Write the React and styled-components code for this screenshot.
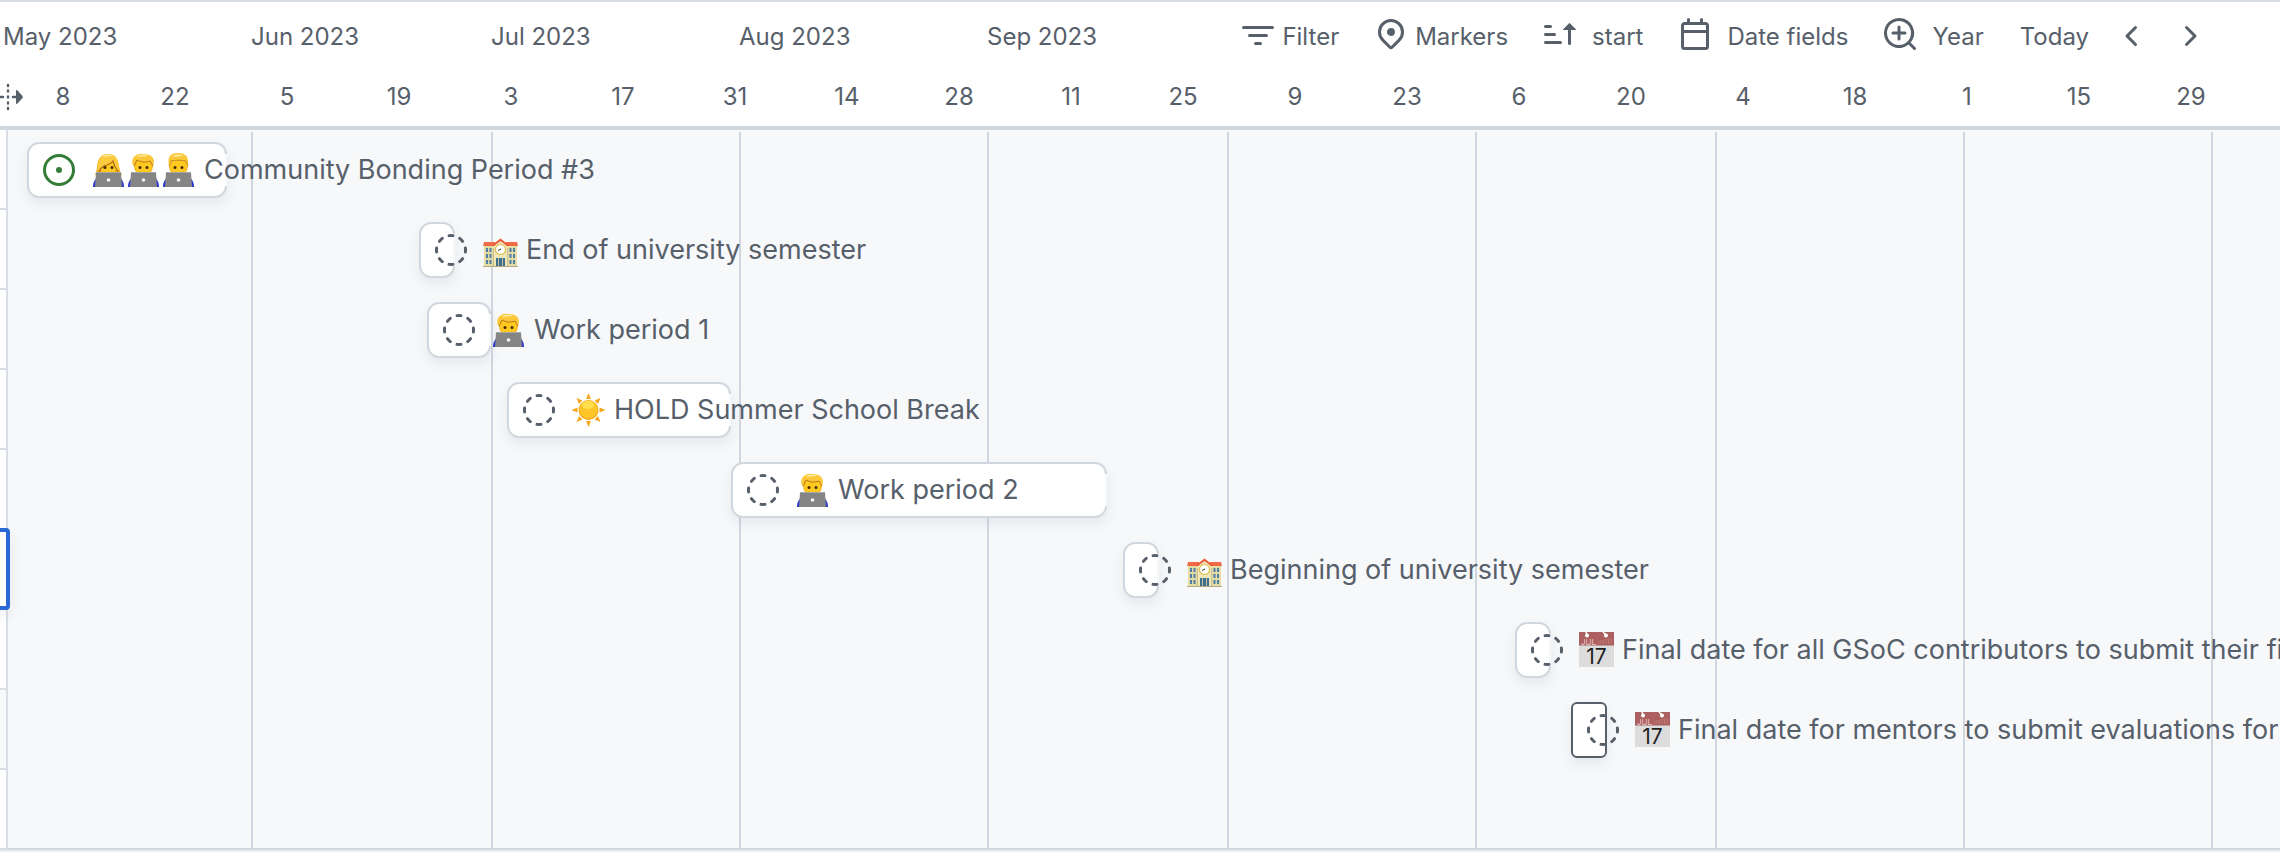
import React from "react";
import styled, { createGlobalStyle } from "styled-components";

const DAY = 8;
const SCROLL = 5;

const GlobalStyle = createGlobalStyle`
  *, *::before, *::after { box-sizing: border-box; }
  body {
    margin: 0;
    min-height: 100vh;
    background: #eaeef2;
    color: #57606a;
    font-family: Inter, "Liberation Sans", sans-serif;
  }
  ul, ol { margin: 0; padding: 0; list-style: none; }
`;

const Page = styled.div`
  overflow: hidden;
`;

const Header = styled.header`
  position: relative;
  background: #fff;
  border-top: 2px solid #d8dee4;
  border-bottom: 4px solid #d0d7de;
  font-size: 24px;
  line-height: 32px;
`;

const HeaderTop = styled.div`
  display: flex;
  align-items: center;
  height: 70px;
`;

const Months = styled.ol`
  display: flex;
  flex: 1;
  min-width: 0;
  overflow: hidden;
  padding-left: 3px;
`;

const Month = styled.li`
  flex: none;
  width: ${(p) => p.$days * DAY}px;
`;

const Toolbar = styled.div`
  display: flex;
  align-items: center;
  flex: none;
  gap: 36px;
  padding-right: 75px;
`;

const ToolButton = styled.button`
  display: flex;
  align-items: center;
  gap: ${(p) => p.$gap || 0}px;
  padding: 0;
  border: 0;
  background: none;
  color: inherit;
  font: inherit;
  cursor: pointer;
`;

const Pager = styled.div`
  display: flex;
  gap: 24px;
  margin-left: -8px;
`;

const Days = styled.ol`
  display: flex;
  height: 54px;
  padding: 9px 0 0 7px;
`;

const DayLabel = styled.li`
  flex: none;
  width: ${14 * DAY}px;
  text-align: center;
`;

const ResizeMark = styled.svg`
  position: absolute;
  left: 0;
  bottom: 14px;
  width: 24px;
  height: 30px;
`;

const Body = styled.main`
  display: flex;
`;

const TableEdge = styled.div`
  position: relative;
  z-index: 1;
  flex: none;
  width: 8px;
  background: #fff;
  border-right: 2px solid #d8dee4;
`;

const EdgeCell = styled.div`
  height: 80px;
  border-bottom: 2px solid #d8dee4;
  background: ${(p) => (p.$muted ? "#f6f8fa" : "#fff")};
`;

const SelectedCell = styled.div`
  position: absolute;
  top: 398px;
  right: -4px;
  width: 40px;
  height: 82px;
  border: 4px solid #2b6ad6;
  border-radius: 4px;
  background: #fff;
  box-shadow: 0 6px 12px rgba(140, 149, 159, 0.15);
`;

const Timeline = styled.section`
  display: grid;
  flex: 1;
  min-width: 0;
  overflow: hidden;
  background: #f6f8fa;
  border-bottom: 2px solid #d0d7de;
`;

const GridLines = styled.div`
  grid-area: 1 / 1;
  display: flex;
  min-width: 0;
  padding-top: 2px;
  overflow: hidden;
`;

const GridMonth = styled.div`
  flex: none;
  width: ${(p) => p.$days * DAY - (p.$first ? SCROLL : 0)}px;
  border-left: ${(p) => (p.$first ? 0 : 2)}px solid #d0d7de;
`;

const Items = styled.ul`
  grid-area: 1 / 1;
  min-width: 0;
`;

const Item = styled.li`
  display: flex;
  align-items: center;
  height: 80px;
  padding-left: ${(p) => p.$start * DAY - SCROLL}px;
`;

const Bar = styled.div`
  position: relative;
  display: flex;
  align-items: center;
  flex: none;
  gap: 16px;
  width: ${(p) => Math.max(36, p.$days * DAY)}px;
  height: 56px;
  padding-left: 14px;
  border: 2px solid ${(p) => (p.$focused ? "#57606a" : "#d0d7de")};
  border-radius: ${(p) => (p.$focused ? 6 : 12)}px;
  background: #fff;
  box-shadow: 0 6px 12px rgba(140, 149, 159, 0.15);
  white-space: nowrap;

  &::after {
    content: "";
    position: absolute;
    top: 10px;
    right: -2px;
    width: 2px;
    height: 32px;
    background: ${(p) => (p.$focused ? "transparent" : "#f6f8fa")};
  }
`;

const Title = styled.a`
  position: relative;
  z-index: 1;
  display: flex;
  align-items: center;
  gap: 8px;
  color: #57606a;
  font-size: 27px;
  line-height: 40px;
  text-decoration: none;
`;

const EmojiRun = styled.span`
  display: flex;
`;

const Glyph = styled.svg`
  display: block;
  flex: none;
  width: 32px;
  height: 32px;
  fill: currentColor;
`;

const ToolGlyph = styled(Glyph)`
  margin-bottom: ${(p) => (p.$raised ? 6 : 2)}px;
`;

const StatusGlyph = styled(Glyph)`
  position: relative;
  z-index: 1;
  color: ${(p) => (p.$open ? "#347d39" : "#57606a")};
`;

const EmojiGlyph = styled.svg`
  display: block;
  flex: none;
  width: 35px;
  height: 36px;
`;

const PATHS = {
  filter:
    "M.75 3h14.5a.75.75 0 0 1 0 1.5H.75a.75.75 0 0 1 0-1.5ZM3 7.75A.75.75 0 0 1 3.75 7h8.5a.75.75 0 0 1 0 1.5h-8.5A.75.75 0 0 1 3 7.75Zm3 4a.75.75 0 0 1 .75-.75h2.5a.75.75 0 0 1 0 1.5h-2.5a.75.75 0 0 1-.75-.75Z",
  location:
    "m12.596 11.596-3.535 3.536a1.5 1.5 0 0 1-2.122 0l-3.535-3.536a6.5 6.5 0 1 1 9.192-9.193 6.5 6.5 0 0 1 0 9.193Zm-1.06-8.132v-.001a5 5 0 1 0-7.072 7.072L8 14.07l3.536-3.534a5 5 0 0 0 0-7.072ZM8 9a2 2 0 1 1-.001-3.999A2 2 0 0 1 8 9Z",
  sort:
    "m12.927 2.573 3 3A.25.25 0 0 1 15.75 6H13.5v6.75a.75.75 0 0 1-1.5 0V6H9.75a.25.25 0 0 1-.177-.427l3-3a.25.25 0 0 1 .354 0ZM0 12.25a.75.75 0 0 1 .75-.75h7.5a.75.75 0 0 1 0 1.5H.75a.75.75 0 0 1-.75-.75Zm0-4a.75.75 0 0 1 .75-.75h4.5a.75.75 0 0 1 0 1.5H.75A.75.75 0 0 1 0 8.25Zm0-4a.75.75 0 0 1 .75-.75h2.5a.75.75 0 0 1 0 1.5H.75A.75.75 0 0 1 0 4.25Z",
  calendar:
    "M4.75 0a.75.75 0 0 1 .75.75V2h5V.75a.75.75 0 0 1 1.5 0V2h1.25c.966 0 1.75.784 1.75 1.75v10.5A1.75 1.75 0 0 1 13.25 16H2.75A1.75 1.75 0 0 1 1 14.25V3.75C1 2.784 1.784 2 2.75 2H4V.75A.75.75 0 0 1 4.75 0ZM2.5 7.5v6.75c0 .138.112.25.25.25h10.5a.25.25 0 0 0 .25-.25V7.5Zm10.75-4H2.75a.25.25 0 0 0-.25.25V6h11V3.75a.25.25 0 0 0-.25-.25Z",
  zoom:
    "M3.75 7.5a.75.75 0 0 1 .75-.75h2.25V4.5a.75.75 0 0 1 1.5 0v2.25h2.25a.75.75 0 0 1 0 1.5H8.25v2.25a.75.75 0 0 1-1.5 0V8.25H4.5a.75.75 0 0 1-.75-.75ZM7.5 0a7.5 7.5 0 0 1 5.807 12.247l2.473 2.473a.749.749 0 1 1-1.06 1.06l-2.473-2.473A7.5 7.5 0 1 1 7.5 0Zm-6 7.5a6 6 0 1 0 12 0 6 6 0 0 0-12 0Z",
  left:
    "M9.78 12.78a.75.75 0 0 1-1.06 0L4.47 8.53a.75.75 0 0 1 0-1.06l4.25-4.25a.751.751 0 0 1 1.042.018.751.751 0 0 1 .018 1.042L6.06 8l3.72 3.72a.75.75 0 0 1 0 1.06Z",
  right:
    "M6.22 3.22a.75.75 0 0 1 1.06 0l4.25 4.25a.75.75 0 0 1 0 1.06l-4.25 4.25a.751.751 0 0 1-1.042-.018.751.751 0 0 1-.018-1.042L9.94 8 6.22 4.28a.75.75 0 0 1 0-1.06Z",
};

const Icon = ({ name, raised }) => (
  <ToolGlyph viewBox="0 0 16 16" $raised={raised} aria-hidden="true">
    <path d={PATHS[name]} />
  </ToolGlyph>
);

const Status = ({ open }) => (
  <StatusGlyph viewBox="0 0 16 16" $open={open} aria-hidden="true">
    {open && <circle cx="8" cy="8" r="1.5" />}
    <circle
      cx="8"
      cy="8"
      r="7.25"
      fill="none"
      stroke="currentColor"
      strokeWidth="1.5"
      strokeLinecap="round"
      pathLength="360"
      strokeDasharray={open ? undefined : "16 29"}
      strokeDashoffset={open ? undefined : 8}
    />
  </StatusGlyph>
);

const Technologist = ({ hair }) => (
  <EmojiGlyph viewBox="0 0 35 36" role="img" aria-label="technologist">
    <path d="M2 35c0-5 2-8 5-10h21c3 2 5 5 5 10z" fill="#2b36d0" />
    {hair === "long" && (
      <path d="M17 2C9 2 7 8 6 14c0 4-1 6-2 9h27c-2-3-2-5-3-9-1-6-3-12-11-12z" fill="#f5b321" />
    )}
    <ellipse cx="17.500" cy="14" rx="9.500" ry="9.500" fill="#f3ac14" />
    <ellipse cx="17.500" cy="14.500" rx="8.500" ry="8.500" fill="#ffc91f" />
    {hair === "long" && (
      <>
        <path d="M7 19C6 9 9 2 17 2c9 0 11 7 11 17-3-3-5-6-6-10-4 4-9 4-11 6-2 1-3 2-4 4z" fill="#fccb3d" />
        <path d="M8 20c1-3 3-5 5-6 4-1 7-2 9-5 1 5 3 8 5 11" fill="none" stroke="#a8650f" strokeWidth="1.200" />
      </>
    )}
    {hair === "side" && (
      <>
        <path d="M7 14C4 6 10 1 18 2c8 0 12 5 9 12-1-2-2-3-3-5-5 2-9 1-13-1-1 3-3 4-4 6z" fill="#fcc738" />
        <path d="M8 14c1-2 2-4 3-6 4 2 8 3 13 1 1 2 2 3 3 5" fill="none" stroke="#b5761a" strokeWidth="1" />
      </>
    )}
    {hair === "short" && (
      <>
        <path d="M8 14C6 5 9 1 17 1c9 0 11 5 10 13-1-2-2-3-2-5-5-1-11-1-15 0 0 2-1 3-2 5z" fill="#fcc738" />
        <path d="M8 14c1-2 2-3 2-5 4-1 10-1 15 0 0 2 1 3 2 5" fill="none" stroke="#c98a22" strokeWidth="1" />
      </>
    )}
    <path d="M11 5c3-3 8-3 11-1-4 0-7 1-11 1z" fill="#ffe99a" />
    <circle cx="14" cy="15.500" r="1.500" fill="#4a2a0c" />
    <circle cx="21" cy="15.500" r="1.500" fill="#4a2a0c" />
    <path d="M5 20h25l1 15H4z" fill="#858585" />
    <path d="M5 20h25v1H5z" fill="#a6a6a6" />
    <circle cx="17.500" cy="28" r="1.800" fill="#f4f4f4" />
  </EmojiGlyph>
);

const School = () => (
  <EmojiGlyph viewBox="0 -2 35 36" role="img" aria-label="school">
    <path d="M1 11h33v22H1z" fill="#e3dba6" />
    <path d="M10 11l7.500-6 7.500 6v22H10z" fill="#efe7b9" />
    <path d="M10 14h1v19h-1zM24 14h1v19h-1z" fill="#c9bf88" />
    <path d="M1 8h11v4H0zM23 8h11l1 4H23z" fill="#ee6a48" />
    <path d="M8 12l9.500-7.500L27 12h-3l-6.500-5L11 12z" fill="#ee5a36" />
    <g fill="#4f7fa0">
      <path d="M3 14h2v4H3zM6.500 14h2v4h-2zM3 20h2v4H3zM6.500 20h2v4h-2zM3 26h2v4H3zM6.500 26h2v4h-2z" />
      <path d="M26.500 14h2v4h-2zM30 14h2v4h-2zM26.500 20h2v4h-2zM30 20h2v4h-2zM26.500 26h2v4h-2zM30 26h2v4h-2z" />
    </g>
    <path d="M13 24h9v8h-9z" fill="#3d6f92" />
    <path d="M15.500 24v8M19.500 24v8" stroke="#c9bf88" strokeWidth="1" />
    <circle cx="17.500" cy="15.500" r="5.500" fill="#dcbb3c" />
    <circle cx="17.500" cy="15.500" r="4.500" fill="#fff" />
    <path d="M18 15l-3 1.500" stroke="#333" strokeWidth="1" />
    <path d="M0 32h35v1H0z" fill="#b5ab7c" />
  </EmojiGlyph>
);

const Sun = () => (
  <EmojiGlyph viewBox="0 0 35 36" role="img" aria-label="sun">
    <g fill="#f6a51c">
      {[0, 45, 90, 135, 180, 225, 270, 315].map((a) => (
        <path key={a} d="M17.500 1l2.400 6h-4.800z" transform={`rotate(${a} 17.500 18)`} />
      ))}
    </g>
    <circle cx="17.500" cy="18" r="10" fill="#fba919" />
    <circle cx="17.500" cy="17.500" r="9" fill="#ffc629" />
    <ellipse cx="17" cy="13" rx="6" ry="4" fill="#ffdf4d" />
  </EmojiGlyph>
);

const CalendarEmoji = () => (
  <EmojiGlyph viewBox="0 0 35 36" role="img" aria-label="calendar">
    <path d="M0 0h35v35H0z" fill="#dcdcdc" />
    <path d="M0 0h35v13.500H0z" fill="#ab5f5f" />
    <circle cx="8" cy="3.500" r="2" fill="#fff" />
    <circle cx="27" cy="3.500" r="2" fill="#fff" />
    <path d="M7 0l1 3M24 0l3 3" stroke="#fff" strokeWidth="1.500" />
    <path d="M19.500 12V9M22 12V8M24.500 12V8M27 12V7M29.500 12V7M32 12V6" stroke="#bd7a7a" strokeWidth="1" />
    <text x="2" y="12.500" fontSize="8" fill="#e8c9c9">JUL</text>
    <text x="17.500" y="31.500" fontSize="21" fill="#1f1f1f" textAnchor="middle">17</text>
  </EmojiGlyph>
);

const MONTHS = [
  ["May 2023", 31],
  ["Jun 2023", 30],
  ["Jul 2023", 31],
  ["Aug 2023", 31],
  ["Sep 2023", 30],
];
const GRID = [31, 30, 31, 31, 30, 31, 30, 31, 31, 29];
const DAYS = [8, 22, 5, 19, 3, 17, 31, 14, 28, 11, 25, 9, 23, 6, 20, 4, 18, 1, 15, 29];

const ITEMS = [
  {
    start: 3,
    days: 25,
    open: true,
    emoji: [<Technologist key="a" hair="long" />, <Technologist key="b" hair="side" />, <Technologist key="c" hair="short" />],
    title: "Community Bonding Period #3",
  },
  { start: 52, days: 1, emoji: <School />, title: "End of university semester" },
  { start: 53, days: 8, emoji: <Technologist hair="side" />, title: "Work period 1" },
  { start: 63, days: 28, emoji: <Sun />, title: "HOLD Summer School Break" },
  { start: 91, days: 47, emoji: <Technologist hair="side" />, title: "Work period 2" },
  { start: 140, days: 1, emoji: <School />, title: "Beginning of university semester" },
  {
    start: 189,
    days: 1,
    emoji: <CalendarEmoji />,
    title: "Final date for all GSoC contributors to submit their final work product",
  },
  {
    start: 196,
    days: 1,
    focused: true,
    emoji: <CalendarEmoji />,
    title: "Final date for mentors to submit evaluations for GSoC contributor projects",
  },
];

export default function App() {
  return (
    <Page>
      <GlobalStyle />
      <Header>
        <HeaderTop>
          <Months>
            {MONTHS.map(([name, days]) => (
              <Month key={name} $days={days}>{name}</Month>
            ))}
          </Months>
          <Toolbar>
            <ToolButton type="button" $gap={8}><Icon name="filter" />Filter</ToolButton>
            <ToolButton type="button" $gap={8}><Icon name="location" raised />Markers</ToolButton>
            <ToolButton type="button" $gap={16}><Icon name="sort" raised />start</ToolButton>
            <ToolButton type="button" $gap={16}><Icon name="calendar" raised />Date fields</ToolButton>
            <ToolButton type="button" $gap={16}><Icon name="zoom" raised />Year</ToolButton>
            <ToolButton type="button">Today</ToolButton>
            <Pager>
              <ToolButton type="button" aria-label="Previous"><Icon name="left" /></ToolButton>
              <ToolButton type="button" aria-label="Next"><Icon name="right" /></ToolButton>
            </Pager>
          </Toolbar>
        </HeaderTop>
        <Days>
          {DAYS.map((day, i) => (
            <DayLabel key={i}>{day}</DayLabel>
          ))}
        </Days>
        <ResizeMark viewBox="0 0 24 30" aria-hidden="true">
          <g stroke="#57606a" strokeWidth="2.500" strokeLinecap="round">
            <path d="M8 3v1M8 8.500v1M8 14.500v1M8 20.500v1M8 26v1" />
            <path d="M0 15h3M13 15h3" />
          </g>
          <path d="M16 9q0-1.500 1.500-.5l5 5.500q.800 1 0 2l-5 5.500q-1.500 1-1.500-.5z" fill="#57606a" />
        </ResizeMark>
      </Header>
      <Body>
        <TableEdge>
          {Array.from({ length: 9 }, (_, i) => (
            <EdgeCell key={i} $muted={i === 7} />
          ))}
          <SelectedCell />
        </TableEdge>
        <Timeline>
          <GridLines>
            {GRID.map((days, i) => (
              <GridMonth key={i} $days={days} $first={i === 0} />
            ))}
          </GridLines>
          <Items>
            {ITEMS.map((item) => (
              <Item key={item.title} $start={item.start}>
                <Bar $days={item.days} $focused={item.focused}>
                  <Status open={item.open} />
                  <Title href="#">
                    <EmojiRun>{item.emoji}</EmojiRun>
                    {item.title}
                  </Title>
                </Bar>
              </Item>
            ))}
          </Items>
        </Timeline>
      </Body>
    </Page>
  );
}
